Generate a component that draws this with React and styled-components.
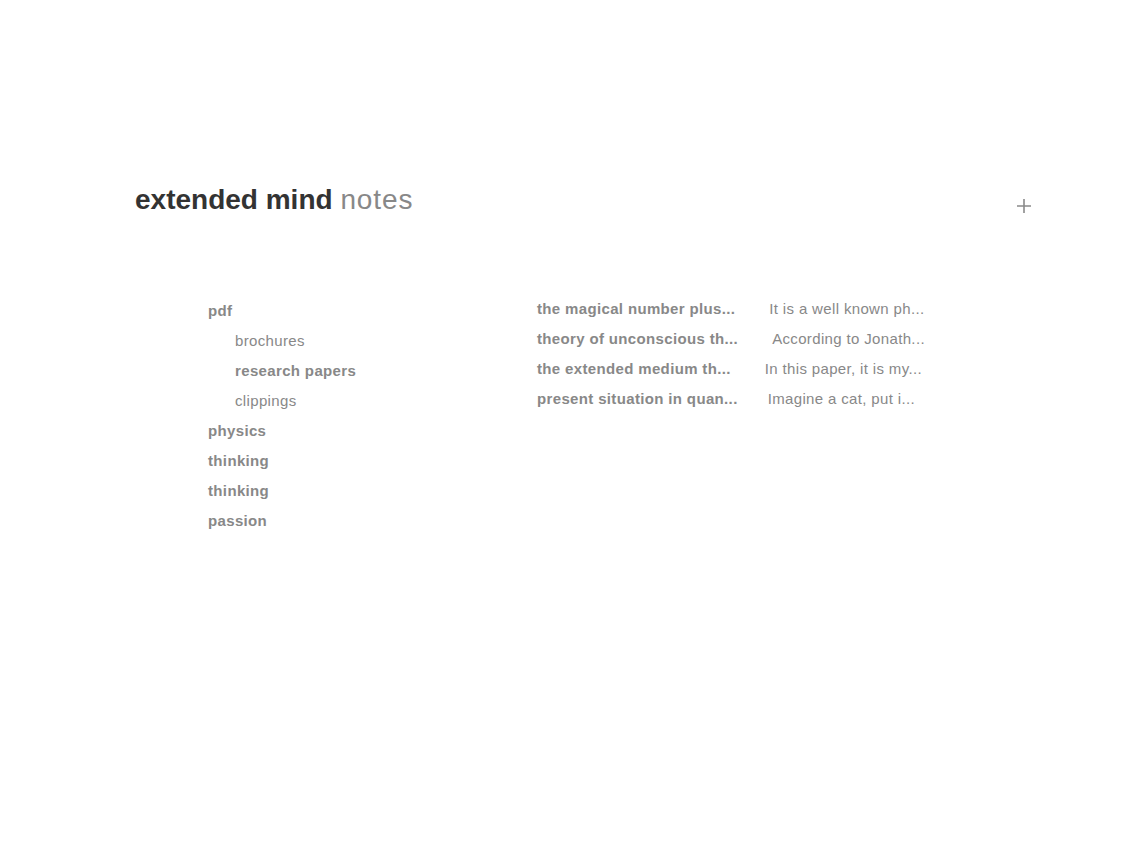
import React from "react";
import styled, { createGlobalStyle } from "styled-components";

const GlobalStyle = createGlobalStyle`
  body {
    margin: 0;
    background: #ffffff;
    font-family: "Liberation Sans", Arial, sans-serif;
  }
`;

const Page = styled.div`
  padding: 180px 110px 0 135px;
`;

const Header = styled.div`
  display: flex;
  justify-content: space-between;
  align-items: center;
`;

const Title = styled.h1`
  margin: 0;
  font-size: 28px;
  line-height: 40px;
  font-weight: 700;
  color: #333333;
`;

const Sub = styled.span`
  font-weight: 400;
  color: #888888;
  letter-spacing: 0.9px;
`;

const AddButton = styled.button`
  border: none;
  background: transparent;
  padding: 0;
  margin-top: 12px;
  width: 16px;
  height: 16px;
  cursor: pointer;
  display: flex;
`;

const Body = styled.div`
  display: flex;
  padding: 76px 0 0 73px;
`;

const Tree = styled.ul`
  list-style: none;
  margin: 0;
  padding: 0;
  width: 329px;
`;

const Item = styled.li`
  font-size: 15px;
  line-height: 30px;
  letter-spacing: 0.35px;
  color: #888888;
  font-weight: ${(p) => (p.$bold ? 700 : 400)};
  padding-left: ${(p) => (p.$depth ? 27 : 0)}px;
`;

const Notes = styled.div`
  display: flex;
  flex-direction: column;
  margin-top: -2px;
`;

const NoteRow = styled.div`
  display: flex;
  font-size: 15px;
  line-height: 30px;
  letter-spacing: 0.35px;
  color: #888888;
  white-space: nowrap;
`;

const NoteTitle = styled.span`
  font-weight: 700;
  margin-right: ${(p) => p.$gap}px;
`;

const Excerpt = styled.span``;

const folders = [
  { name: "pdf", bold: true },
  { name: "brochures", depth: 1 },
  { name: "research papers", depth: 1, bold: true },
  { name: "clippings", depth: 1 },
  { name: "physics", bold: true },
  { name: "thinking", bold: true },
  { name: "thinking", bold: true },
  { name: "passion", bold: true },
];

const notes = [
  { title: "the magical number plus...", text: "It is a well known ph...", gap: 34 },
  { title: "theory of unconscious th...", text: "According to Jonath...", gap: 34 },
  { title: "the extended medium th...", text: "In this paper, it is my...", gap: 34 },
  { title: "present situation in quan...", text: "Imagine a cat, put i...", gap: 30 },
];

export default function App() {
  return (
    <>
      <GlobalStyle />
      <Page>
        <Header>
          <Title>
            extended mind <Sub>notes</Sub>
          </Title>
          <AddButton aria-label="add">
            <svg width="16" height="16" viewBox="0 0 16 16">
              <path d="M8 1v14M1 8h14" stroke="#8a8a8a" strokeWidth="1.6" />
            </svg>
          </AddButton>
        </Header>
        <Body>
          <Tree>
            {folders.map((f, i) => (
              <Item key={i} $bold={f.bold} $depth={f.depth}>
                {f.name}
              </Item>
            ))}
          </Tree>
          <Notes>
            {notes.map((n, i) => (
              <NoteRow key={i}>
                <NoteTitle $gap={n.gap}>{n.title}</NoteTitle>
                <Excerpt>{n.text}</Excerpt>
              </NoteRow>
            ))}
          </Notes>
        </Body>
      </Page>
    </>
  );
}
